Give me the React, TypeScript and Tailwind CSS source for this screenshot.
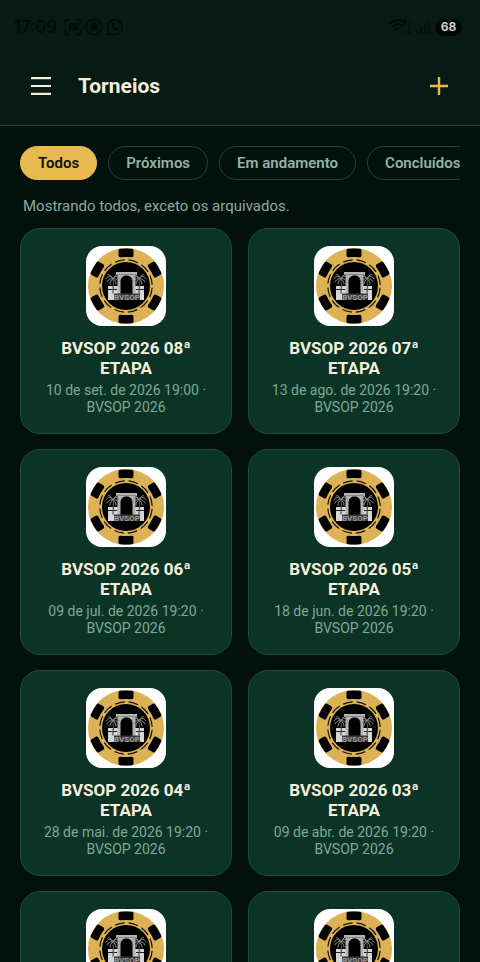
import React from "react";

const filters = ["Todos", "Próximos", "Em andamento", "Concluídos"];

const tournaments = [
  { title: "BVSOP 2026 08ª ETAPA", date: "10 de set. de 2026 19:00" },
  { title: "BVSOP 2026 07ª ETAPA", date: "13 de ago. de 2026 19:20" },
  { title: "BVSOP 2026 06ª ETAPA", date: "09 de jul. de 2026 19:20" },
  { title: "BVSOP 2026 05ª ETAPA", date: "18 de jun. de 2026 19:20" },
  { title: "BVSOP 2026 04ª ETAPA", date: "28 de mai. de 2026 19:20" },
  { title: "BVSOP 2026 03ª ETAPA", date: "09 de abr. de 2026 19:20" },
  { title: "BVSOP 2026 02ª ETAPA", date: "12 de mar. de 2026 19:20" },
  { title: "BVSOP 2026 01ª ETAPA", date: "12 de fev. de 2026 19:20" },
];

function Palm({ x }: { x: number }) {
  return (
    <g transform={`translate(${x} 33)`} fill="none" stroke="#97979b" strokeLinecap="round">
      <path d="M0 0C-2-4-5-3-7 0M0 0C-3-1-5 1-6 3M0 0C-2-4-4-5-5-4M0 0C2-4 5-3 7 0M0 0C3-1 5 1 6 3M0 0C2-4 4-5 5-4M0 0C-2 1-3 3-3 5M0 0C2 1 3 3 3 5" strokeWidth="1" />
      <path d="M0 0C1 6 0 10 0 14" stroke="#4a4a4d" strokeWidth="1.2" />
    </g>
  );
}

function ChipLogo() {
  return (
    <svg viewBox="0 0 80 80" className="size-20 shrink-0 rounded-2xl bg-white" aria-hidden="true">
      <circle cx="40" cy="40" r="38" fill="#dcb255" />
      {[0, 60, 120, 180, 240, 300].map((a) => (
        <path key={a} transform={`rotate(${a} 40 40)`} d="M32.5 4.5Q32.5 3 34 2.8Q40 2.2 46 2.8Q47.5 3 47.5 4.5V9.5Q47.5 11.5 45.5 11.3Q40 10.7 34.5 11.3Q32.5 11.5 32.5 9.5Z" fill="#000" />
      ))}
      <circle cx="40" cy="40" r="26.2" fill="none" stroke="#15110a" strokeWidth="1.2" strokeDasharray="9.7 4.018" transform="rotate(4 40 40)" />
      <circle cx="40" cy="40" r="24" fill="#000" />
      <path d="M22 40H58V54H22Z" fill="#d6d6d7" />
      <path d="M30 26H51V29H49.5V54H31.5V29H30Z" fill="#b4b4b6" />
      <path d="M30.5 28.5H50.5" stroke="#6c6c6e" strokeWidth=".6" />
      <path d="M22 43.5H31M50 43.5H58" stroke="#222" strokeWidth="1" />
      <path d="M34.5 49V35C34.5 27.500 46.5 27.500 46.5 35V49Z" fill="#000" />
      <Palm x={27} />
      <Palm x={53} />
      <path d="M28 47.5H54V54H28Z" fill="#3a3a3b" />
      <text x="41" y="53.5" textAnchor="middle" fill="#9c9c9e" className="font-['Roboto',sans-serif] text-[8px] font-bold">BVSOP</text>
    </svg>
  );
}

function StatusBar() {
  return (
    <div className="flex h-[54px] items-center justify-between pr-[18px] pl-[14px] text-[#010c08]">
      <div className="flex items-center gap-[3px]">
        <span className="mr-1 font-['Inter',sans-serif] text-[17px] leading-5 font-medium">17:09</span>
        <svg viewBox="0 0 18 18" className="size-[18px]" fill="none" stroke="currentColor" strokeWidth="1.6" strokeLinecap="round" aria-hidden="true">
          <path d="M1.5 5V4Q1.5 1.5 4 1.5H5M13 1.5H14Q16.5 1.5 16.5 4V5M16.5 13V14Q16.5 16.5 14 16.5H13M5 16.5H4Q1.5 16.5 1.5 14V13" />
          <rect x="5.5" y="6" width="7" height="6" rx="1.5" />
          <path d="M6 10L8 8L10 10L12 9" />
        </svg>
        <svg viewBox="0 0 18 18" className="size-[18px]" fill="none" stroke="currentColor" strokeWidth="1.6" aria-hidden="true">
          <circle cx="9" cy="9" r="7.8" />
          <path d="M6.5 6H11.5V12.5H6.5ZM7.5 4.5H10.5V6H7.5Z" fill="currentColor" />
        </svg>
        <svg viewBox="0 0 18 18" className="size-[18px]" fill="none" stroke="currentColor" strokeWidth="1.6" aria-hidden="true">
          <path d="M1.5 16.5L2.6 12.7A7.3 7.3 0 1 1 5.3 15.4Z" strokeLinejoin="round" />
          <path d="M6.3 5.2C4.8 7.5 8.5 13 12 12.2L12.8 10.8L11 9.8L10.2 10.5C9 10 8 9 7.6 8L8.2 7.2L7.4 5.3Z" fill="currentColor" stroke="none" />
        </svg>
      </div>
      <div className="flex items-center gap-1">
        <svg viewBox="0 0 24 18" className="h-[18px] w-6" fill="none" stroke="currentColor" strokeWidth="1.8" aria-hidden="true">
          <path d="M1 6Q9-1 18 5M4 9Q9 4 15 8M6.5 12Q9 9.5 12 11" />
          <path d="M17 2V8M15 4L17 2L19 4M21 16V10M19 14L21 16L23 14M17 16V11M20 3H23V7H20" strokeWidth="1" />
        </svg>
        <svg viewBox="0 0 14 18" className="h-[18px] w-[14px]" fill="currentColor" aria-hidden="true">
          <path d="M0 12H2V16H0ZM4 9H6V16H4ZM8 6H10V16H8ZM12 3H14V16H12Z" opacity=".6" />
        </svg>
        <span className="ml-px flex h-[17px] w-[27px] items-center justify-center rounded-full bg-[#010806] font-['Inter',sans-serif] text-xs leading-4 font-bold text-[#c8cfcc]">68</span>
      </div>
    </div>
  );
}

export default function App() {
  return (
    <div className="flex h-screen flex-col overflow-hidden bg-[#03110c] font-['Roboto',sans-serif]">
      <header className="shrink-0 border-b border-[#1e4537] bg-[#061b14]">
        <StatusBar />
        <div className="flex h-[71px] items-center px-5 pb-[7px]">
          <button type="button" aria-label="Abrir menu" className="flex size-[42px] items-center justify-center text-[#f5efdc]">
            <svg viewBox="0 0 20 18" className="h-[18px] w-5" fill="currentColor" aria-hidden="true">
              <path d="M0 0H20V2.3H0ZM0 7.9H20V10.1H0ZM0 15.7H20V18H0Z" />
            </svg>
          </button>
          <h1 className="ml-4 flex-1 text-[21px] leading-6 font-bold text-[#f5efdc]">Torneios</h1>
          <button type="button" aria-label="Novo torneio" className="flex size-[42px] items-center justify-center text-[#e8b94f]">
            <svg viewBox="0 0 18 18" className="size-[18px]" fill="currentColor" aria-hidden="true">
              <path d="M7.8 0H10.2V7.8H18V10.2H10.2V18H7.8V10.2H0V7.8H7.8Z" />
            </svg>
          </button>
        </div>
      </header>
      <main className="min-h-0 flex-1 overflow-hidden px-5 pt-5">
        <div className="flex gap-[11px] overflow-hidden">
          {filters.map((name, i) => (
            <button
              key={name}
              type="button"
              aria-pressed={i === 0}
              className={
                i === 0
                  ? "h-[34px] shrink-0 rounded-full border border-[#e8b94f] bg-[#e8b94f] px-[17px] text-[15px] leading-5 font-semibold text-[#0b120a]"
                  : "h-[34px] shrink-0 rounded-full border border-[#1e4537] px-[17px] text-[15px] leading-5 font-semibold text-[#93b3a3]"
              }
            >
              {name}
            </button>
          ))}
        </div>
        <p className="mt-4 px-[3px] text-[15px] leading-5 text-[#8dab9d]">Mostrando todos, exceto os arquivados.</p>
        <div className="mt-3 grid grid-cols-2 gap-x-4 gap-y-[15px]">
          {tournaments.map((t) => (
            <article key={t.title} className="flex flex-col items-center rounded-[20px] border border-[#1e4d3b] bg-[#0b3427] px-[17px] py-[17px] text-center">
              <ChipLogo />
              <h2 className="mt-3 text-[17px] leading-5 font-bold text-[#f5efdc]">{t.title}</h2>
              <p className="mt-1 text-[14px] leading-[17px] text-[#7fa996]">{t.date} · BVSOP 2026</p>
            </article>
          ))}
        </div>
      </main>
    </div>
  );
}
